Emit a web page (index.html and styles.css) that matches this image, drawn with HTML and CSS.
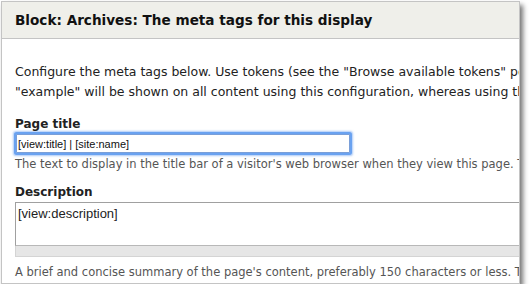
FILE: index.html
```html
<!DOCTYPE html>
<html lang="en">
<head>
    <meta charset="UTF-8">
    <title>Block: Archives meta tags</title>
    <link rel="stylesheet" href="styles.css">
</head>
<body>
    <div class="dialog">
        <div class="dialog-title">Block: Archives: The meta tags for this display</div>
        <div class="dialog-body">
            <p class="intro">Configure the meta tags below. Use tokens (see the "Browse available tokens" popup at the bottom of the page) to avoid redundant meta data and search engine penalization. For example, a 'keyword' value of<br>"example" will be shown on all content using this configuration, whereas using the [node:field_keywords] automatically inserts the "keywords" values from the current entity.</p>

            <div class="form-item">
                <label for="edit-title">Page title</label>
                <input type="text" id="edit-title" class="form-text" value="[view:title] | [site:name]">
                <div class="description">The text to display in the title bar of a visitor's web browser when they view this page. This meta tag may also be used as the title of the page when shared on social networks.</div>
            </div>

            <div class="form-item">
                <label for="edit-description">Description</label>
                <div class="textarea-wrap">
                    <textarea id="edit-description" class="form-textarea">[view:description]</textarea>
                    <div class="grippie"></div>
                </div>
                <div class="description">A brief and concise summary of the page's content, preferably 150 characters or less. The description meta tag may be used by search engines to display a snippet about the page in search results.</div>
            </div>
        </div>
    </div>
</body>
</html>
```

FILE: styles.css
```css
html, body {
    margin: 0;
    padding: 0;
    background: #fff;
}
body {
    padding: 1px 0 0 1px;
    font-family: "DejaVu Sans", Verdana, sans-serif;
    color: #222;
}
.dialog {
    width: 517px;
    height: 281px;
    border: 1px solid #c4c4c4;
    background: #fff;
    box-shadow: 3px 4px 5px rgba(0,0,0,0.55);
    overflow: hidden;
}
.dialog-title {
    height: 36px;
    line-height: 36px;
    padding-left: 13px;
    background: #efefea;
    border-bottom: 1px solid #c4c4c4;
    font-size: 13.6px;
    font-weight: bold;
    color: #111;
    white-space: nowrap;
}
.dialog-body {
    padding: 0 0 0 13px;
    font-size: 12px;
}
.intro {
    margin: 23px 0 0;
    line-height: 20px;
    font-size: 12.5px;
    white-space: nowrap;
}
.form-item {
    margin-top: 15px;
}
.form-item + .form-item {
    margin-top: 13px;
}
.form-item label {
    display: block;
    font-weight: bold;
    font-size: 12px;
    line-height: 14px;
    margin-bottom: 3px;
}
.form-text {
    display: block;
    box-sizing: border-box;
    width: 334px;
    height: 19px;
    margin: 1px 0 0 1px;
    padding: 1px 1px;
    border: 1px solid #7a9fd8;
    border-radius: 1px;
    outline: none;
    box-shadow: 0 0 0 2px #6aa2f0, 0 0 2px 3px rgba(90,150,240,0.5);
    font-family: "Liberation Sans", Arial, sans-serif;
    font-size: 11px;
    color: #111;
}
.description {
    margin-top: 4px;
    color: #555;
    font-size: 11.5px;
    line-height: 15px;
    white-space: nowrap;
}
.textarea-wrap {
    width: 520px;
    margin-top: 0;
}
.textarea-wrap + .description {
    margin-top: 8px;
}
.form-textarea {
    display: block;
    box-sizing: border-box;
    width: 100%;
    height: 44px;
    margin: 0;
    padding: 3px 2px;
    border: 1px solid #a0a0a0;
    border-bottom: 1px solid #b8b8b8;
    resize: none;
    font-family: "Liberation Sans", Arial, sans-serif;
    font-size: 13px;
    color: #222;
}
.grippie {
    height: 10px;
    background: #e6e6e6;
    border: 1px solid #d4d4d4;
    border-top: 0;
}
```
